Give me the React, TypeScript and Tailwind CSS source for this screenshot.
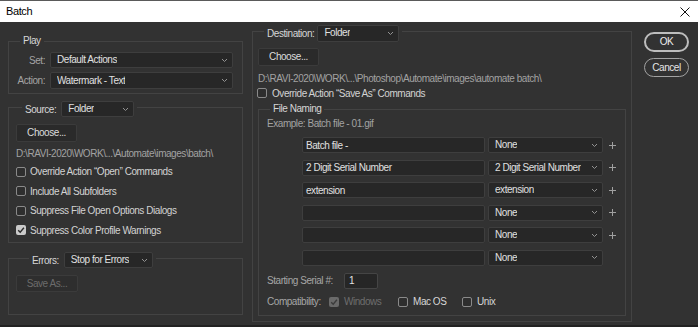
import React from "react";

const Chevron = () => (
  <svg width="7" height="5" viewBox="0 0 7 5" className="shrink-0">
    <path d="M1 1l2.5 2.5L6 1" fill="none" stroke="#929292" strokeWidth="1" />
  </svg>
);

const Plus = () => (
  <svg width="7" height="7" viewBox="0 0 7 7" className="shrink-0">
    <path d="M3.5 0v7M0 3.5h7" stroke="#a0a0a0" strokeWidth="1" />
  </svg>
);

function Select({ value, className }: { value: string; className: string }) {
  return (
    <div
      className={`flex items-center justify-between rounded-[2px] border border-[#3e3e3e] bg-[#272727] pl-[6px] pr-[4px] text-[#e0e0e0] ${className}`}
    >
      <span className="truncate leading-none">{value}</span>
      <Chevron />
    </div>
  );
}

function Check({ checked = false, disabled = false }: { checked?: boolean; disabled?: boolean }) {
  if (checked) {
    return (
      <span
        className={`flex h-[10px] w-[10px] shrink-0 items-center justify-center rounded-[2px] ${
          disabled ? "bg-[#6a6a6a]" : "bg-[#cacaca]"
        }`}
      >
        <svg width="8" height="8" viewBox="0 0 8 8">
          <path
            d="M1.2 4.2l2 2L6.9 1.8"
            fill="none"
            stroke={disabled ? "#3c3c3c" : "#2a2a2a"}
            strokeWidth="1.4"
          />
        </svg>
      </span>
    );
  }
  return <span className="h-[10px] w-[10px] shrink-0 rounded-[2px] border border-[#8a8a8a] bg-[#2e2e2e]" />;
}

const Button = ({ label, className, disabled = false }: { label: string; className: string; disabled?: boolean }) => (
  <button
    className={`flex items-center justify-center rounded-[2px] border border-[#3b3b3b] leading-none ${
      disabled ? "bg-[#2e2e2e] text-[#6c6c6c]" : "bg-[#2a2a2a] text-[#dcdcdc]"
    } ${className}`}
  >
    {label}
  </button>
);

const sourceChecks: [string, boolean][] = [
  ["Override Action \u201COpen\u201D Commands", false],
  ["Include All Subfolders", false],
  ["Suppress File Open Options Dialogs", false],
  ["Suppress Color Profile Warnings", true],
];

const naming: [string, string][] = [
  ["Batch file -", "None"],
  ["2 Digit Serial Number", "2 Digit Serial Number"],
  ["extension", "extension"],
  ["", "None"],
  ["", "None"],
  ["", "None"],
];

export default function App() {
  return (
    <div className="flex h-[327px] w-[698px] flex-col overflow-hidden bg-[#323232] font-['Liberation_Sans',Arial,sans-serif] text-[10px] tracking-[-0.45px] whitespace-nowrap">
      {/* title bar */}
      <div className="flex h-[22px] shrink-0 items-center justify-between border-t border-[#5a5a5a] bg-white pl-[6px] pr-[8px] text-[11px] tracking-[-0.4px] text-black">
        <span>Batch</span>
        <svg width="10" height="10" viewBox="0 0 10 10">
          <path d="M0.5 0.5l9 9M9.5 0.5l-9 9" stroke="#111" strokeWidth="1" />
        </svg>
      </div>

      <div className="flex h-[303px] shrink-0">
        {/* left column */}
        <div className="ml-[8px] flex w-[235px] flex-col">
          <fieldset className="mt-[12px] w-[235px] min-w-0 border border-[#434343] px-[7px] pt-[4px] pb-[4px]">
            <legend className="ml-[4px] px-[3px] leading-[14px] text-[#d6d6d6]">Play</legend>
            <div className="flex flex-col gap-[4px] pr-[2px]">
              <div className="flex items-center gap-[5px]">
                <span className="w-[29px] text-right text-[#a4a4a4]">Set:</span>
                <Select value="Default Actions" className="h-[16px] flex-1" />
              </div>
              <div className="flex items-center gap-[5px]">
                <span className="w-[29px] text-right text-[#a4a4a4]">Action:</span>
                <Select value="Watermark - Text" className="h-[17px] flex-1" />
              </div>
            </div>
          </fieldset>

          <fieldset className="mt-[7px] w-[235px] min-w-0 border border-[#434343] px-[7px] pt-[11px] pb-[2px]">
            <legend className="ml-[6px] px-[3px]">
              <div className="-mb-[4px] flex h-[16px] items-center gap-[5px]">
                <span className="text-[#d6d6d6]">Source:</span>
                <Select value="Folder" className="h-[16px] w-[73px]" />
              </div>
            </legend>
            <Button label="Choose..." className="h-[18px] w-[61px]" />
            <div className="mt-[5px] leading-[14px] text-[#a2a2a2]">
              {"D:\\RAVI-2020\\WORK\\...\\Automate\\images\\batch\\"}
            </div>
            <div className="mt-[1px] flex flex-col">
              {sourceChecks.map(([label, checked]) => (
                <div key={label} className="flex h-[19.5px] items-center gap-[4px] text-[#d2d2d2]">
                  <Check checked={checked} />
                  <span>{label}</span>
                </div>
              ))}
            </div>
          </fieldset>

          <fieldset className="mt-[9px] w-[235px] min-w-0 border border-[#434343] px-[7px] pt-[11px] pb-[22px]">
            <legend className="ml-[13px] px-[3px]">
              <div className="-mb-[4px] flex h-[16px] items-center gap-[5px]">
                <span className="text-[#d6d6d6]">Errors:</span>
                <Select value="Stop for Errors" className="h-[16px] w-[89px]" />
              </div>
            </legend>
            <Button label="Save As..." disabled className="h-[17px] w-[62px]" />
          </fieldset>
        </div>

        {/* destination */}
        <fieldset className="mt-[3px] ml-[9px] w-[380px] min-w-0 self-start border border-[#434343] px-[5px] pt-[11px] pb-[5px]">
          <legend className="ml-[6px] px-[3px]">
            <div className="-mb-[4px] flex h-[16px] items-center gap-[3px]">
              <span className="text-[#d6d6d6]">Destination:</span>
              <Select value="Folder" className="h-[17px] w-[82px]" />
            </div>
          </legend>
          <Button label="Choose..." className="h-[18px] w-[61px]" />
          <div className="mt-[6px] leading-[14px] text-[#a2a2a2]">
            {"D:\\RAVI-2020\\WORK\\...\\Photoshop\\Automate\\images\\automate batch\\"}
          </div>
          <div className="-ml-[1px] flex h-[14px] items-center gap-[5px] text-[#d2d2d2]">
            <Check />
            <span>Override Action {"\u201CSave As\u201D"} Commands</span>
          </div>

          <fieldset className="mt-[2px] min-w-0 border border-[#434343] px-[8px] pt-[1px] pb-[6px]">
            <legend className="ml-[3px] px-[3px] leading-[14px] text-[#d6d6d6]">File Naming</legend>
            <div className="leading-[14px] text-[#a2a2a2]">Example: Batch file - 01.gif</div>
            <div className="mt-[6px] flex flex-col gap-[6.6px] pl-[35px]">
              {naming.map(([text, option], i) => (
                <div key={i} className="flex h-[16px] items-center">
                  <div className="flex h-[16px] w-[183px] items-center rounded-[2px] border border-[#3e3e3e] bg-[#272727] pl-[3px] text-[#e0e0e0]">
                    {text}
                  </div>
                  <Select value={option} className="ml-[3px] h-[16px] w-[115px]" />
                  {i < naming.length - 1 && (
                    <span className="ml-[6px] flex">
                      <Plus />
                    </span>
                  )}
                </div>
              ))}
            </div>
            <div className="mt-[7px] flex h-[16px] items-center">
              <span className="w-[77px] text-[#a6a6a6]">Starting Serial #:</span>
              <div className="flex h-[16px] w-[34px] items-center rounded-[2px] border border-[#454545] bg-[#262626] pl-[4px] text-[#e2e2e2]">
                1
              </div>
            </div>
            <div className="mt-[6px] flex h-[14px] items-center">
              <span className="w-[62px] text-[#a6a6a6]">Compatibility:</span>
              <div className="flex w-[69px] items-center gap-[5px]">
                <Check checked disabled />
                <span className="text-[#6e6e6e]">Windows</span>
              </div>
              <div className="flex w-[64px] items-center gap-[5px]">
                <Check />
                <span className="text-[#d6d6d6]">Mac OS</span>
              </div>
              <div className="flex items-center gap-[5px]">
                <Check />
                <span className="text-[#d6d6d6]">Unix</span>
              </div>
            </div>
          </fieldset>
        </fieldset>

        {/* buttons */}
        <div className="mt-[10px] ml-[12px] flex w-[45px] flex-col gap-[6px]">
          <button className="flex h-[20px] items-center justify-center rounded-full border-2 border-[#bdbdbd] leading-none text-[#ececec]">
            OK
          </button>
          <button className="flex h-[19px] items-center justify-center rounded-full border-[1.5px] border-[#a2a2a2] leading-none text-[#e6e6e6]">
            Cancel
          </button>
        </div>
      </div>
      <div className="h-[2px] shrink-0 bg-[#222222]" />
    </div>
  );
}
